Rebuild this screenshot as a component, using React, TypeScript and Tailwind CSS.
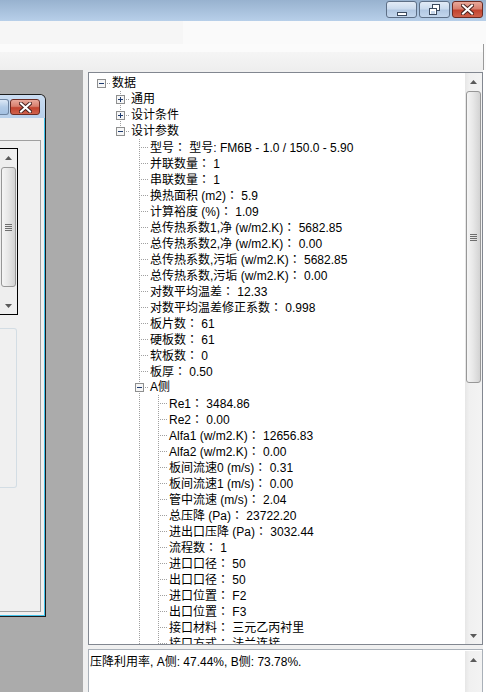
import React from 'react';

type TreeNode = { label: string; children?: TreeNode[]; open?: boolean };

const aSide: TreeNode[] = [
  { label: 'Re1： 3484.86' },
  { label: 'Re2： 0.00' },
  { label: 'Alfa1 (w/m2.K)： 12656.83' },
  { label: 'Alfa2 (w/m2.K)： 0.00' },
  { label: '板间流速0 (m/s)： 0.31' },
  { label: '板间流速1 (m/s)： 0.00' },
  { label: '管中流速 (m/s)： 2.04' },
  { label: '总压降 (Pa)： 23722.20' },
  { label: '进出口压降 (Pa)： 3032.44' },
  { label: '流程数： 1' },
  { label: '进口口径： 50' },
  { label: '出口口径： 50' },
  { label: '进口位置： F2' },
  { label: '出口位置： F3' },
  { label: '接口材料： 三元乙丙衬里' },
  { label: '接口方式： 法兰连接' },
  { label: '接管材料： 不锈钢' },
];

const design: TreeNode[] = [
  { label: '型号： 型号: FM6B - 1.0 / 150.0 - 5.90' },
  { label: '并联数量： 1' },
  { label: '串联数量： 1' },
  { label: '换热面积 (m2)： 5.9' },
  { label: '计算裕度 (%)： 1.09' },
  { label: '总传热系数1,净 (w/m2.K)： 5682.85' },
  { label: '总传热系数2,净 (w/m2.K)： 0.00' },
  { label: '总传热系数,污垢 (w/m2.K)： 5682.85' },
  { label: '总传热系数,污垢 (w/m2.K)： 0.00' },
  { label: '对数平均温差： 12.33' },
  { label: '对数平均温差修正系数： 0.998' },
  { label: '板片数： 61' },
  { label: '硬板数： 61' },
  { label: '软板数： 0' },
  { label: '板厚： 0.50' },
  { label: 'A侧', open: true, children: aSide },
  { label: 'B侧', open: true, children: [{ label: 'Re1： 5120.40' }] },
];

const tree: TreeNode[] = [
  {
    label: '数据',
    open: true,
    children: [
      { label: '通用', children: [{ label: '-' }] },
      { label: '设计条件', children: [{ label: '-' }] },
      { label: '设计参数', open: true, children: design },
    ],
  },
];

type Row = { label: string; guides: boolean[]; hasNext: boolean; hasChildren: boolean; open: boolean; top: boolean };

function flatten(nodes: TreeNode[], guides: boolean[], out: Row[], isRoot: boolean): Row[] {
  nodes.forEach((n, i) => {
    const hasNext = i < nodes.length - 1;
    out.push({ label: n.label, guides, hasNext, hasChildren: !!n.children, open: !!n.open, top: isRoot && i === 0 });
    if (n.children && n.open) flatten(n.children, [...guides, hasNext], out, false);
  });
  return out;
}

const rows = flatten(tree, [], [], true);
const DOT = '#a0a0a0';

const GuideCell = ({ on }: { on: boolean }) => (
  <svg width="19" height="16" className="block shrink-0" shapeRendering="crispEdges">
    {on && <line x1="10.5" y1="0" x2="10.5" y2="16" stroke={DOT} strokeDasharray="1 1" />}
  </svg>
);

const NodeCell = ({ row }: { row: Row }) => (
  <svg width="19" height="16" className="block shrink-0" shapeRendering="crispEdges">
    {!row.top && <line x1="10.5" y1="0" x2="10.5" y2="8" stroke={DOT} strokeDasharray="1 1" />}
    {row.hasNext && <line x1="10.5" y1="8" x2="10.5" y2="16" stroke={DOT} strokeDasharray="1 1" />}
    <line x1={row.hasChildren ? 16 : 12} y1="8.5" x2="19" y2="8.5" stroke={DOT} strokeDasharray="1 1" />
    {row.hasChildren && (
      <g>
        <rect x="6.5" y="4.5" width="8" height="8" fill="#f6f6f6" stroke="#8e8f8f" />
        <line x1="8" y1="8.5" x2="13" y2="8.5" stroke="#1d3a6e" />
        {!row.open && <line x1="10.5" y1="6" x2="10.5" y2="11" stroke="#1d3a6e" />}
      </g>
    )}
  </svg>
);

// the full-width colon sits centred in its cell, as in the original font
const Label = ({ text }: { text: string }) => {
  const at = text.indexOf('：');
  if (at < 0) return <>{text}</>;
  return (
    <>
      {text.slice(0, at)}
      <span className="font-[family-name:'Noto_Sans_CJK_TC',sans-serif]">：</span>
      {text.slice(at + 1)}
    </>
  );
};

const Arrow = ({ dir }: { dir: 'up' | 'down' }) => (
  <div className="h-[17px] shrink-0 flex items-center justify-center">
    <svg width="7" height="4" viewBox="0 0 7 4">
      <polygon points={dir === 'up' ? '3.5,0 7,4 0,4' : '0,0 7,0 3.5,4'} fill="#5a5a5a" />
    </svg>
  </div>
);

const Thumb = ({ h }: { h: string }) => (
  <div
    className={`mx-[1px] mt-[1px] shrink-0 rounded-[3px] border border-[#979797] bg-[linear-gradient(to_right,#f5f5f5,#e8e8e8_45%,#d3d3d3)] flex flex-col items-center justify-center gap-[1px] ${h}`}
  >
    <div className="w-[7px] h-[1px] bg-[#6e6e6e]" />
    <div className="w-[7px] h-[1px] bg-[#6e6e6e]" />
    <div className="w-[7px] h-[1px] bg-[#6e6e6e]" />
    <div className="w-[7px] h-[1px] bg-[#6e6e6e]" />
  </div>
);

const CloseGlyph = () => (
  <svg width="13" height="11" viewBox="0 0 13 11">
    <path d="M2 1.5 L11 9.5 M11 1.5 L2 9.5" stroke="#4a2320" strokeWidth="4" strokeLinecap="square" />
    <path d="M2 1.5 L11 9.5 M11 1.5 L2 9.5" stroke="#fff" strokeWidth="2" strokeLinecap="square" />
  </svg>
);

const CaptionButton = ({ kind }: { kind: 'min' | 'max' | 'close' }) => {
  const close = kind === 'close';
  return (
    <div
      className={`h-[17px] w-[31px] flex items-center justify-center rounded-[3px] border ${
        close
          ? 'border-[#6b2a22] bg-[linear-gradient(to_bottom,#e9a99b,#d8806f_45%,#c2432f_55%,#d0624c)]'
          : 'border-[#5d6f86] bg-[linear-gradient(to_bottom,#e2ebf6,#cbdbee_45%,#b2c8e2_55%,#c3d6ec)]'
      }`}
    >
      {kind === 'min' && (
        <svg width="12" height="12" viewBox="0 0 12 12" className="mt-[3px]">
          <rect x="1.5" y="7.5" width="9" height="3" fill="#fff" stroke="#3b4a5e" />
        </svg>
      )}
      {kind === 'max' && (
        <svg width="12" height="12" viewBox="0 0 12 12" shapeRendering="crispEdges">
          <rect x="3.5" y="0.5" width="7" height="6" fill="#fff" stroke="#3b4a5e" />
          <rect x="4.5" y="2.5" width="5" height="3" fill="#fff" stroke="none" />
          <rect x="0.5" y="4.5" width="7" height="6" fill="#fff" stroke="#3b4a5e" />
          <rect x="2" y="6.5" width="4" height="3" fill="#c9d8ea" />
        </svg>
      )}
      {close && <CloseGlyph />}
    </div>
  );
};

const ChildWindow = () => (
  <div className="mt-[24px] w-[46px] h-[523px] flex flex-col border-t border-r border-b border-[#1c1c1c] rounded-tr-[6px] overflow-hidden">
    <div className="h-[23px] shrink-0 flex items-start pt-[4px] bg-[linear-gradient(to_bottom,#cadcf1,#b8d0ea)]">
      <div className="w-[9px] h-[16px] mr-[1px] rounded-r-[3px] border border-l-0 border-[#6d84a0] bg-[linear-gradient(to_bottom,#dce8f6,#b2cbe6_50%,#a4c1e2)]" />
      <div className="w-[30px] h-[16px] flex items-center justify-center rounded-[3px] border border-[#6b2a22] bg-[linear-gradient(to_bottom,#e9a99b,#d8806f_45%,#c2432f_55%,#d0624c)]">
        <CloseGlyph />
      </div>
    </div>
    <div className="flex-1 flex flex-col border-r border-b border-[#41c2ea]">
      <div className="flex-1 flex flex-col bg-[#f0f0f0] pr-[3px] pb-[3px]">
        <div className="mt-[22px] flex-1 flex flex-col border-t border-r border-b border-[#a0a0a0]">
          <div className="mt-[7px] w-[18px] h-[167px] shrink-0 flex flex-col border-t border-r border-b border-black bg-[#eeeeee]">
            <Arrow dir="up" />
            <Thumb h="h-[120px]" />
            <div className="flex-1" />
            <Arrow dir="down" />
          </div>
          <div className="mt-[13px] w-[17px] h-[160px] shrink-0 rounded-r-[3px] border border-l-0 border-[#d3dde4]" />
        </div>
      </div>
    </div>
  </div>
);

export default function App() {
  return (
    <div className="w-[486px] h-[692px] overflow-hidden flex flex-col bg-white text-[12px] text-black font-[family-name:'Liberation_Sans','Noto_Sans_CJK_SC',sans-serif]">
      {/* caption */}
      <div className="h-[21px] shrink-0 flex justify-end items-start gap-[2px] pr-[3px] pt-[1px] bg-[linear-gradient(to_bottom,#98b2cf,#b7cfe9)]">
        <CaptionButton kind="min" />
        <CaptionButton kind="max" />
        <CaptionButton kind="close" />
      </div>

      {/* toolbar strip */}
      <div className="h-[23px] shrink-0 flex">
        <div className="w-[183px] bg-[#f6f6f6]" />
        <div className="flex-1 bg-[#fafafa]" />
      </div>
      <div className="h-[26px] shrink-0 flex">
        <div className="w-[484px] flex flex-col border-r border-[#9a9a9a]">
          <div className="h-[8px] bg-[#fbfbfb]" />
          <div className="flex-1 bg-[linear-gradient(to_bottom,#f5f5f5,#eeeeee)]" />
        </div>
        <div className="flex-1 bg-[#fbfbfb]" />
      </div>

      {/* work area */}
      <div className="flex-1 min-h-0 flex">
        <div className="w-[83px] shrink-0 bg-[#ababab]">
          <ChildWindow />
        </div>

        <div className="flex-1 min-w-0 flex flex-col bg-[#f0f0f0] pl-[5px] pt-[2px] border-r-[3px] border-white">
          {/* tree */}
          <div className="h-[573px] shrink-0 flex border border-[#828790] bg-white">
            <div className="flex-1 min-w-0 overflow-hidden pl-[2px] pt-[2px]">
              {rows.map((row, i) => (
                <div key={i} className="flex h-4 items-center whitespace-nowrap">
                  {row.guides.map((g, j) => (
                    <GuideCell key={j} on={g} />
                  ))}
                  <NodeCell row={row} />
                  <span className="ml-[2px] leading-4">
                    <Label text={row.label} />
                  </span>
                </div>
              ))}
            </div>
            <div className="w-[17px] shrink-0 flex flex-col bg-[linear-gradient(to_right,#e6e6e6,#f0f0f0_25%,#f3f3f3)]">
              <Arrow dir="up" />
              <Thumb h="h-[292px]" />
              <div className="flex-1" />
              <Arrow dir="down" />
            </div>
          </div>

          <div className="h-[4px] shrink-0" />

          {/* message box */}
          <div className="flex-1 min-h-0 flex border-t border-l border-r border-[#a9b0b8] bg-white">
            <div className="flex-1 min-w-0 pl-[1px] pt-[4px] leading-4 whitespace-nowrap">压降利用率, A侧: 47.44%, B侧: 73.78%.</div>
            <div className="w-[17px] shrink-0 mt-[1px] flex flex-col bg-[linear-gradient(to_right,#e6e6e6,#f0f0f0_25%,#f3f3f3)]">
              <Arrow dir="up" />
            </div>
          </div>
        </div>
      </div>
    </div>
  );
}
